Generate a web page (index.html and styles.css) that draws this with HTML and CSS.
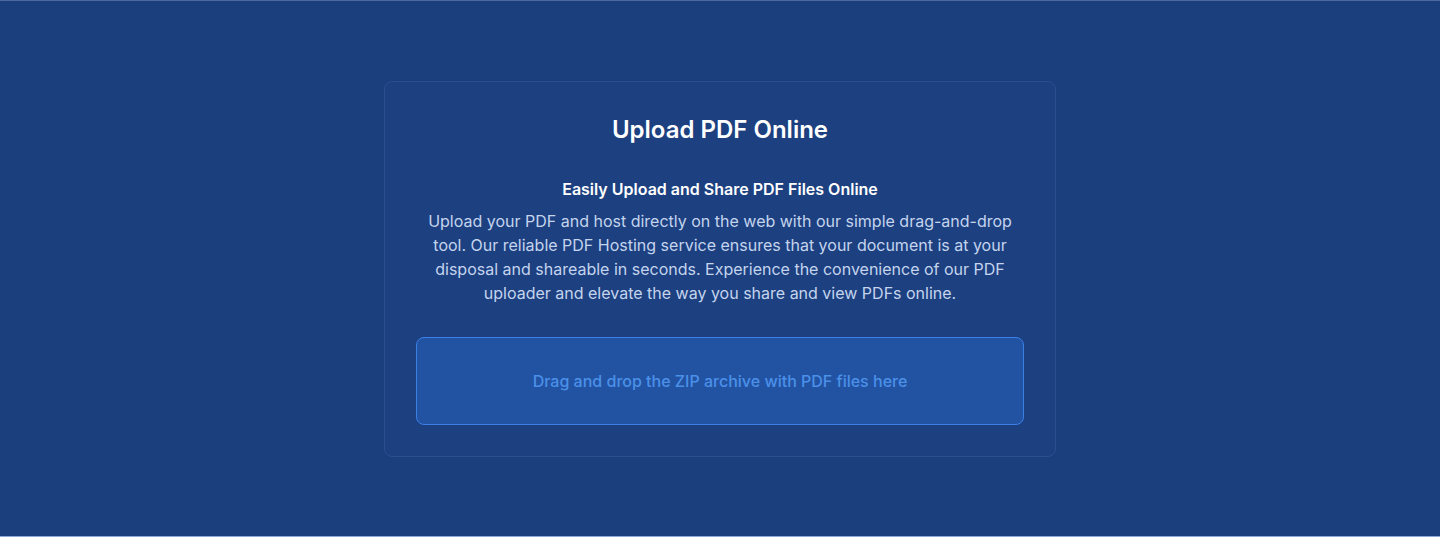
FILE: index.html
```html
<!DOCTYPE html>
<html lang="en">
<head>
<meta charset="utf-8">
<title>Upload PDF Online</title>
<link rel="stylesheet" href="styles.css">
</head>
<body>
<section class="page">
  <div class="card">
    <h1 class="title">Upload PDF Online</h1>
    <h2 class="subtitle">Easily Upload and Share PDF Files Online</h2>
    <p class="desc">Upload your PDF and host directly on the web with our simple drag-and-drop tool. Our reliable PDF Hosting service ensures that your document is at your disposal and shareable in seconds. Experience the convenience of our PDF uploader and elevate the way you share and view PDFs online.</p>
    <div class="dropzone">Drag and drop the ZIP archive with PDF files here</div>
  </div>
</section>
</body>
</html>
```

FILE: styles.css
```css
* { box-sizing: border-box; }
html, body { margin: 0; padding: 0; }
body {
  font-family: Inter, "Noto Sans", sans-serif;
  background: #1b3f7d;
}
.page {
  height: 537px;
  background: #1b3f7d;
  border-top: 1px solid #4c69a0;
  border-bottom: 1px solid #8eaad8;
  padding: 80px 0 79px;
  display: flex;
  justify-content: center;
  align-items: flex-start;
}
.card {
  width: 672px;
  height: 376px;
  border: 1px solid #2a4f8f;
  border-radius: 8px;
  background: #1c4080;
  padding: 32px 31px 31px;
  display: flex;
  flex-direction: column;
  align-items: center;
  text-align: center;
}
.title {
  margin: 0;
  font-size: 24px;
  line-height: 32px;
  font-weight: 600;
  color: #ffffff;
}
.subtitle {
  margin: 31px 0 0;
  font-size: 16px;
  line-height: 24px;
  font-weight: 600;
  color: #ffffff;
}
.desc {
  margin: 8px 0 0;
  max-width: 600px;
  font-size: 16px;
  line-height: 24px;
  font-weight: 400;
  color: #c4d4ee;
}
.dropzone {
  margin-top: 32px;
  width: 608px;
  height: 88px;
  border: 1px solid #3b7fe6;
  border-radius: 8px;
  background: #2253a3;
  color: #4b90e8;
  font-size: 16px;
  line-height: 24px;
  font-weight: 500;
  display: flex;
  align-items: center;
  justify-content: center;
}
```
